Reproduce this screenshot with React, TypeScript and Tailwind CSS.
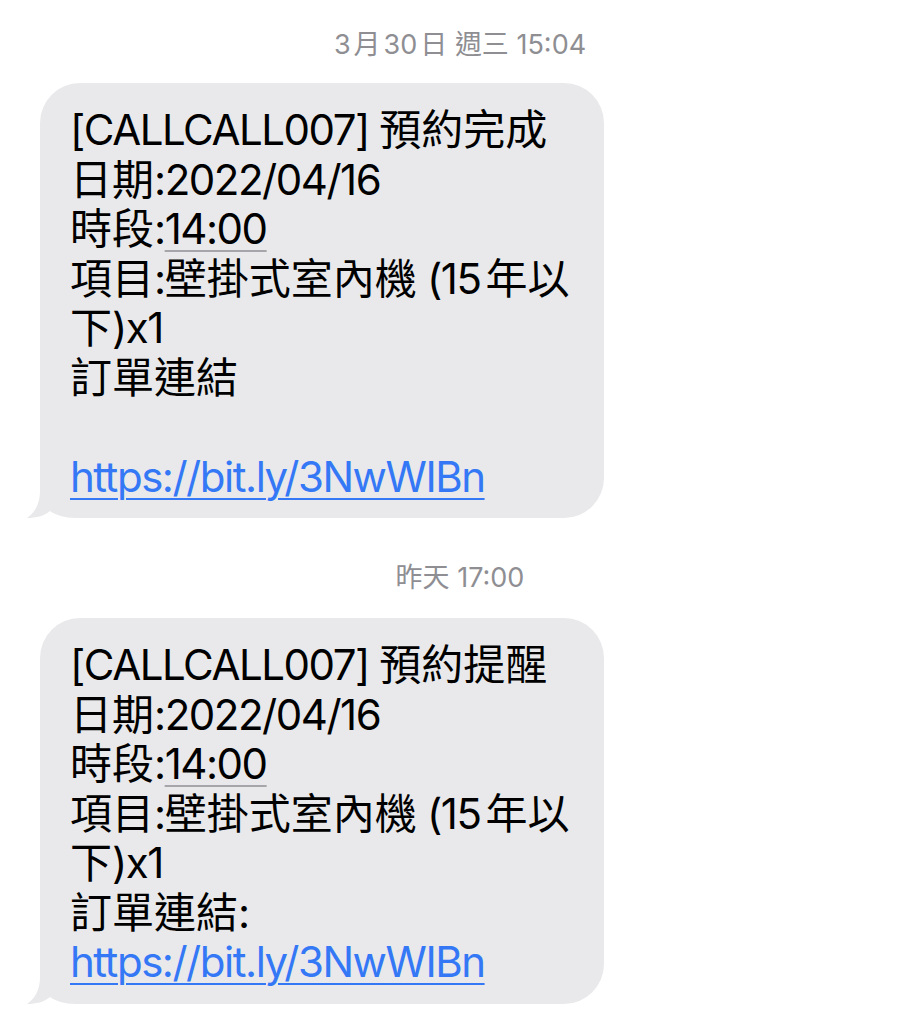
import React from "react";

const Tail = () => (
  <svg
    className="absolute left-[-14px] bottom-0"
    width="60"
    height="45"
    viewBox="0 0 60 45"
  >
    <path
      d="M14 0 L14 18 C14 32 8 40 1 45 C10 45 18 43 24 38 C30 42 38 45 50 45 L60 45 L60 0 Z"
      fill="#e9e9eb"
    />
  </svg>
);

// CJK runs keep normal spacing, latin runs get the tighter tracking of the container
const T = ({ s }: { s: string }) => (
  <>
    {s.split(/([\u3000-\u9fff\uff00-\uffef]+)/).map((part, i) =>
      i % 2 === 1 ? (
        <span key={i} className="tracking-normal">
          {part}
        </span>
      ) : (
        part
      )
    )}
  </>
);

const Stamp = ({ children, className }: { children: React.ReactNode; className: string }) => (
  <div className={`text-center text-[27px] leading-[30px] text-[#8e8e93] ${className}`}>{children}</div>
);

const Bubble = ({ title, colon }: { title: string; colon: boolean }) => (
  <div className="relative ml-[40px] w-[564px] rounded-[40px] bg-[#e9e9eb] pl-[30px] pt-[22px] pb-[17px] text-[42px] leading-[49.5px] tracking-[-0.035em] text-black">
    <Tail />
    <div className="relative whitespace-nowrap">
      <T s={`[CALLCALL007] ${title}`} />
    </div>
    <div className="relative whitespace-nowrap">
      <T s="日期:2022/04/16" />
    </div>
    <div className="relative whitespace-nowrap">
      <T s="時段:" />
      <span className="underline decoration-[#a5a5aa] decoration-2 underline-offset-[6px]">14:00</span>
    </div>
    <div className="relative whitespace-nowrap">
      <T s="項目:壁掛式室內機 (15" />
      <span className="ml-[5px] tracking-normal">年以</span>
    </div>
    <div className="relative whitespace-nowrap">
      <T s="下)x1" />
    </div>
    <div className="relative whitespace-nowrap">
      <T s={`訂單連結${colon ? ":" : ""}`} />
    </div>
    {!colon && <div className="h-[49.5px]" />}
    <div className="relative whitespace-nowrap text-[#3478f6] underline decoration-2 underline-offset-[6px]">
      https://bit.ly/3NwWIBn
    </div>
  </div>
);

export default function App() {
  return (
    <div className="min-h-screen bg-white pt-[30px] pb-[22px] font-['Inter','Noto_Sans_CJK_TC',sans-serif]">
      <Stamp className="">
        3<span className="mx-[3px]">月</span>30<span className="ml-[3px]">日</span> 週三 15:04
      </Stamp>
      <div className="mt-[23px]">
        <Bubble title="預約完成" colon={false} />
      </div>
      <Stamp className="mt-[45px]">昨天 17:00</Stamp>
      <div className="mt-[25px]">
        <Bubble title="預約提醒" colon={true} />
      </div>
    </div>
  );
}
